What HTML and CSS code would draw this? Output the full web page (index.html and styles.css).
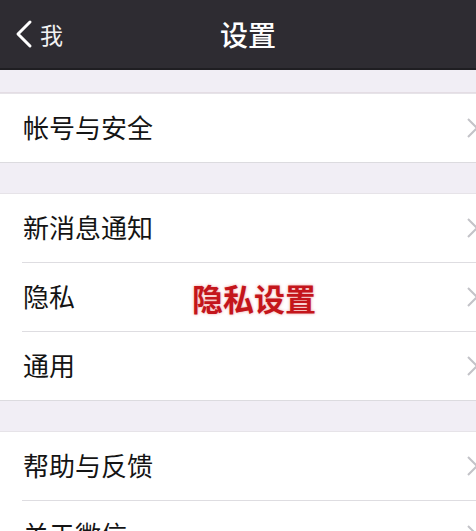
FILE: index.html
```html
<!DOCTYPE html>
<html lang="zh">
<head>
<meta charset="utf-8">
<link rel="stylesheet" href="styles.css">
</head>
<body>
<div class="page">
  <header class="nav">
    <div class="back">
      <svg class="back-icon" width="18" height="30" viewBox="0 0 18 30"><polyline points="15,3 3,15 15,27" fill="none" stroke="#ffffff" stroke-width="3" stroke-linecap="round" stroke-linejoin="round"/></svg>
      <span class="back-text">我</span>
    </div>
    <div class="title">设置</div>
    <div></div>
  </header>

  <div class="spacer first"></div>
  <section class="group">
    <div class="row"><span class="label">帐号与安全</span><svg class="chev" width="14" height="22" viewBox="0 0 14 22"><polyline points="2,2 11,11 2,20" fill="none" stroke="#c3c3c8" stroke-width="2"/></svg></div>
  </section>

  <div class="spacer"></div>
  <section class="group">
    <div class="row"><span class="label">新消息通知</span><svg class="chev" width="14" height="22" viewBox="0 0 14 22"><polyline points="2,2 11,11 2,20" fill="none" stroke="#c3c3c8" stroke-width="2"/></svg></div>
    <div class="row privacy"><span class="label">隐私</span><span class="note">隐私设置</span><svg class="chev" width="14" height="22" viewBox="0 0 14 22"><polyline points="2,2 11,11 2,20" fill="none" stroke="#c3c3c8" stroke-width="2"/></svg></div>
    <div class="row"><span class="label">通用</span><svg class="chev" width="14" height="22" viewBox="0 0 14 22"><polyline points="2,2 11,11 2,20" fill="none" stroke="#c3c3c8" stroke-width="2"/></svg></div>
  </section>

  <div class="spacer"></div>
  <section class="group">
    <div class="row"><span class="label">帮助与反馈</span><svg class="chev" width="14" height="22" viewBox="0 0 14 22"><polyline points="2,2 11,11 2,20" fill="none" stroke="#c3c3c8" stroke-width="2"/></svg></div>
    <div class="row"><span class="label">关于微信</span><svg class="chev" width="14" height="22" viewBox="0 0 14 22"><polyline points="2,2 11,11 2,20" fill="none" stroke="#c3c3c8" stroke-width="2"/></svg></div>
  </section>
</div>
</body>
</html>
```

FILE: styles.css
```css
html, body {
  margin: 0;
  padding: 0;
  background: #f1eef5;
  overflow: hidden;
}
.page {
  width: 476px;
  height: 531px;
  overflow: hidden;
  font-family: "Noto Sans CJK SC", "Noto Sans", sans-serif;
}
.nav {
  height: 68px;
  background: #2e2c32;
  border-bottom: 2px solid #1f1e22;
  display: grid;
  grid-template-columns: 1fr auto 1fr;
  align-items: center;
  padding-left: 20px;
  color: #ffffff;
}
.back {
  display: flex;
  align-items: center;
  margin-left: -5px;
  gap: 7px;
}
.back-icon {
  display: block;
}
.back-text {
  font-size: 23px;
  line-height: 1;
  color: #f2f2f2;
}
.title {
  font-size: 28px;
  line-height: 1;
  font-weight: 500;
}
.spacer {
  height: 30px;
}
.spacer.first {
  height: 22px;
  border-bottom: 1px solid #e4dde4;
}
.group {
  background: #ffffff;
  border-top: 1px solid #e6e3e8;
  border-bottom: 1px solid #dcdbdf;
}
.row {
  position: relative;
  height: 68px;
  display: flex;
  align-items: center;
  justify-content: space-between;
  padding-left: 23px;
  margin-right: -4px;
}
.row + .row {
  border-top: 1px solid transparent;
}
.row + .row::before {
  content: "";
  position: absolute;
  left: 22px;
  right: 0;
  top: -1px;
  height: 1px;
  background: #dedde1;
}
.label {
  font-size: 26px;
  line-height: 1;
  color: #141414;
  margin-top: -2px;
}
.chev {
  display: block;
  flex-shrink: 0;
}
.note {
  position: absolute;
  left: 192px;
  top: 50%;
  transform: translateY(-50%);
  font-size: 31px;
  line-height: 1;
  font-weight: 700;
  color: #c4151b;
  text-shadow: 0 0 3px rgba(220, 40, 40, 0.45);
}
```
